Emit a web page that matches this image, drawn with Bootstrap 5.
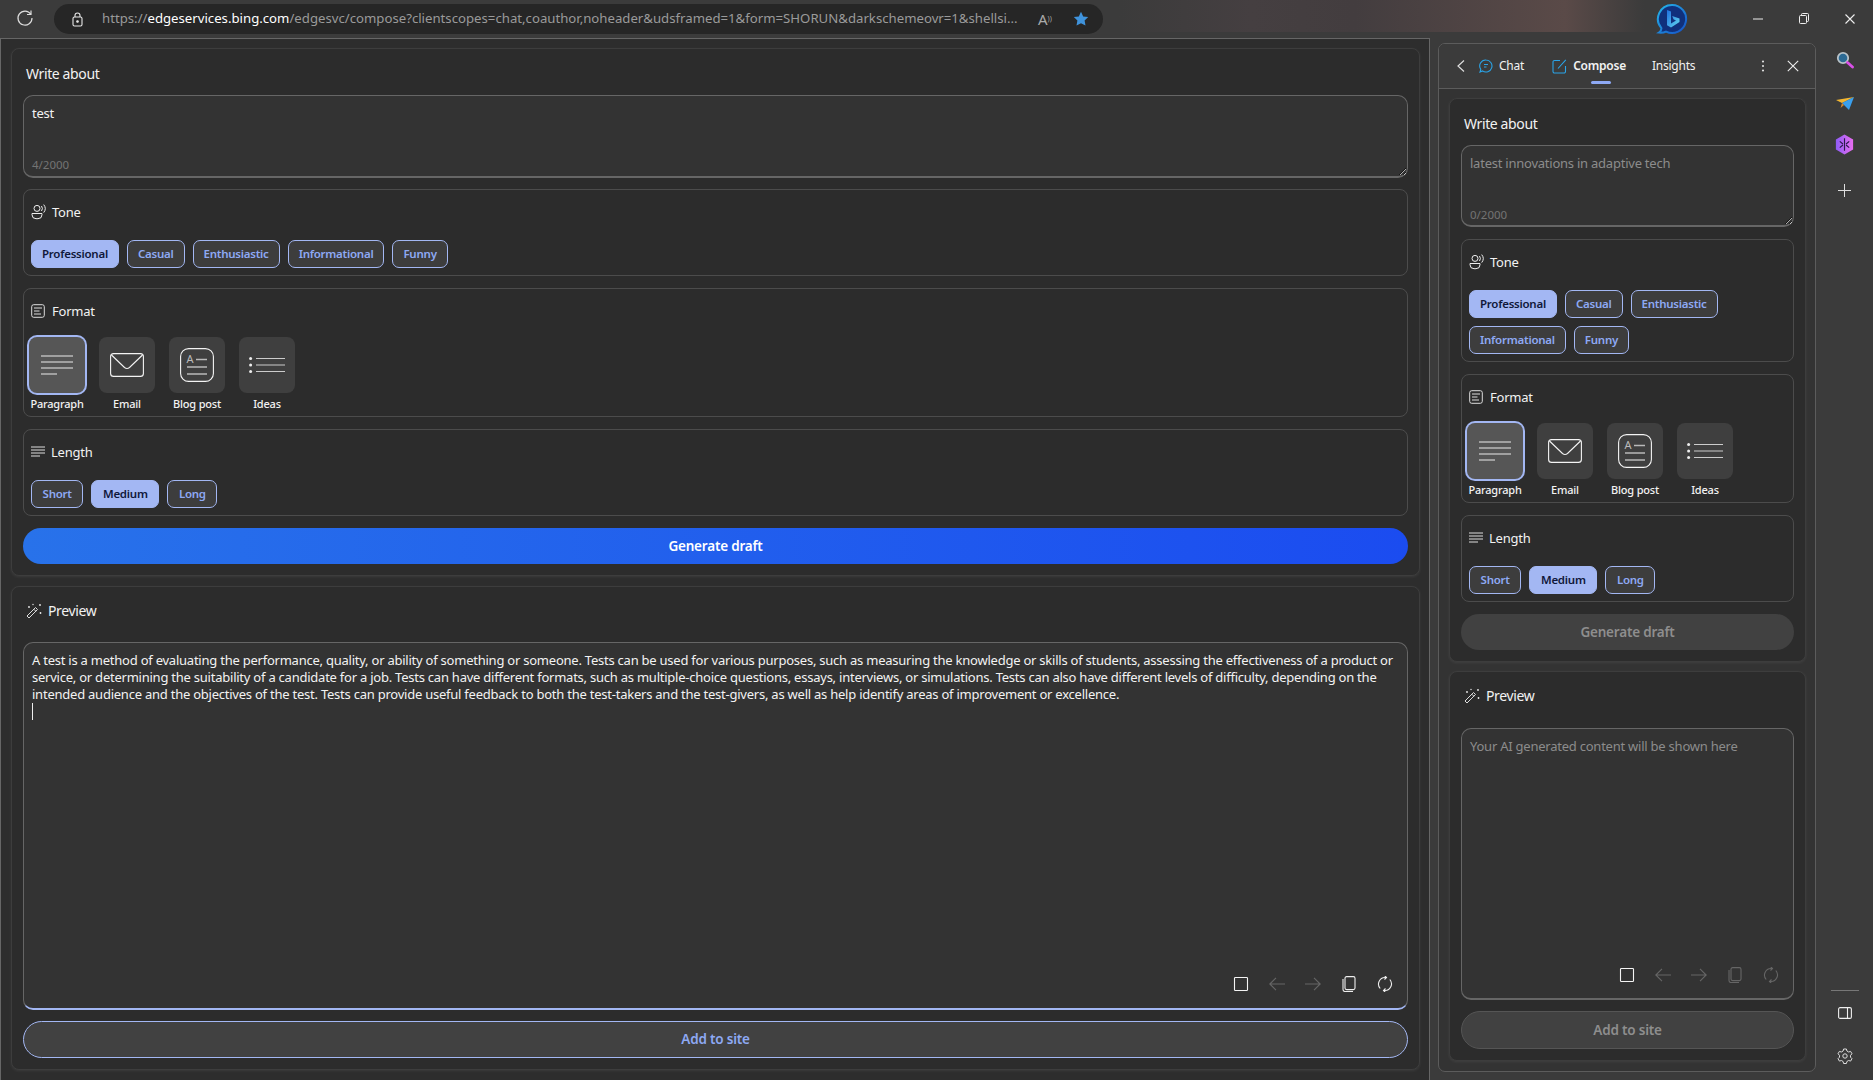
<!DOCTYPE html>
<html lang="en">
<head>
  <meta charset="UTF-8">
  <meta name="viewport" content="width=device-width, initial-scale=1.0">
  <title>Compose</title>
  <link href="https://cdn.jsdelivr.net/npm/bootstrap@5.3.3/dist/css/bootstrap.min.css" rel="stylesheet">
  <style>
    :root { color-scheme: dark; --accent:#a3b7f3; --accent-text:#8ea9f4; }
    body { background:#3b3b3b; color:#f2f2f2; font-family:"Noto Sans","Open Sans",sans-serif; font-size:13px; letter-spacing:-.235px; }
    svg { display:block; flex:none; }
    .topbar { height:38px; background:#3b3b3b; }
    .reload { width:54px; padding:9px 4px 0 0; }
    .addr { width:1049px; height:30px; background:#262626; border-radius:15px; padding:0 14px 0 18px; }
    .addr .url { width:925px; margin-left:19px; font-size:13.2px; letter-spacing:0; color:#9a9a9a; white-space:nowrap; overflow:hidden; }
    .addr .url b { font-weight:400; color:#fff; }
    .read-aloud { margin-left:11px; width:24px; color:#aaa; font-size:15px; letter-spacing:0; }
    .read-aloud sup { font-size:7px; }
    .star { margin-left:11px; }
    .blotch { height:32px; background:linear-gradient(90deg,#3b3b3b 0%,#453f41 25%,#433d3f 45%,#5a4a48 85%,#3b3b3b 100%); width:525px; }
    .logo { width:56px; padding-top:3px; }
    .win { width:46px; padding-top:12px; }
    .page { width:1430px; background:#2d2d2d; border:1px solid #666; border-bottom:0; padding:9px 9px 10px 10px; gap:10px; }
    .side { width:378px; margin:5px 0 8px 8px; background:#333; border:1px solid #5c5c5c; border-radius:7px; overflow:hidden; }
    .side-head { height:45px; flex:none; background:#3b3b3b; border-bottom:1px solid #5c5c5c; font-size:12px; }
    .side-body { padding:9px 9px 10px 10px; gap:9px; min-height:0; }
    .head-back { margin-left:17px; }
    .head-chat { margin-left:13px; }
    .head-label { margin-left:6px; }
    .head-compose { margin-left:28px; }
    .head-insights { margin-left:26px; }
    .head-x { margin:0 16px 0 22px; }
    .tab-on { font-weight:600; position:relative; }
    .tab-line { position:absolute; left:18px; right:15px; bottom:-9px; height:3px; border-radius:2px; background:var(--accent-text); }
    .rail { width:57px; }
    .rail hr { width:28px; margin:0; border-color:#777; opacity:1; }
    .r-search { margin-top:13px; }
    .r-send { margin-top:28px; }
    .r-hex { margin-top:23px; }
    .r-plus { margin-top:29px; }
    .r-pane { margin-top:16px; }
    .r-gear { margin:29px 0 16px; }
    .cc { background:#2c2c2c; border:1px solid #3d3d3d; border-radius:8px; padding:15px 11px 11px; box-shadow:0 1px 3px rgba(255,255,255,.07); flex:none; }
    .cc-title { line-height:20px; font-size:14px; letter-spacing:-.38px; padding-left:3px; margin-bottom:11px; }
    .cc-stack { gap:12px; }
    .cc-grow { flex:1 1 0; min-height:0; padding-top:14px; }
    .cc-grow .cc-title { padding-left:3px; margin-bottom:21px; gap:6px; }
    .side .cc-grow .cc-title { margin-bottom:22px; }
    .ask { height:83px; margin-bottom:-1px; }
    .side .ask { margin-bottom:0; height:82px; }
    .ask textarea { height:100%; background:#333; color:#f2f2f2; border:1px solid #666; border-bottom-width:2px; border-radius:10px; padding:8px 8px; font-size:13px; letter-spacing:-.235px; box-shadow:none; }
    .ask textarea::placeholder { color:#8c8c8c; opacity:1; }
    .count { position:absolute; left:9px; bottom:5px; font-size:11.5px; color:#737373; letter-spacing:0; }
    .side .count { bottom:4px; }
    .box { border:1px solid #4c4c4c; border-radius:8px; padding:12px 7px 7px; }
    .box-title { line-height:20px; font-size:13px; margin-bottom:18px; gap:5px; }
    .box-format { padding-bottom:4px; padding-left:5px; }
    .box-format .box-title { margin-bottom:16px; padding-left:2px; gap:7px; }
    .box-length .box-title { gap:6px; }
    .chip { height:28px; font-size:11.5px; font-weight:600; line-height:26px; padding:0 10px; color:var(--accent-text); background:#3d3d3d; border:1px solid var(--accent); border-radius:7px; letter-spacing:-.25px; }
    .chip.on { background:var(--accent); color:#10183a; }
    .box-length .chip { padding:0 10.6px; }
    .tile-row { gap:14px; }
    .tile { width:56px; height:56px; background:#3f3f3f; border-radius:8px; }
    .tile.on { background:#565656; box-shadow:0 0 0 2px var(--accent); }
    .tile-label { width:56px; margin-top:3px; line-height:16px; font-size:11px; font-weight:500; letter-spacing:-.2px; white-space:nowrap; display:flex; justify-content:center; }
    .wide { height:36px; border-radius:18px; border:0; font-size:13.5px; font-weight:600; letter-spacing:-.2px; }
    .go { background:linear-gradient(90deg,#2872ea,#1b4cf0); color:#fff; }
    .go.off { background:#414141; color:#8e8e8e; }
    .output { flex:1 1 0; min-height:0; background:#333; border:1px solid #666; border-bottom:2px solid var(--accent); border-radius:10px; padding:9px 8px 0; line-height:17px; margin-bottom:11px; }
    .side .output { border-bottom-color:#666; color:#8c8c8c; }
    .caret-mark { width:1px; height:17px; background:#eee; }
    .tools { position:absolute; right:14px; bottom:16px; gap:20px; }
    .side .tools { bottom:15px; }
    .tools svg { width:16px; height:16px; }
    .tool-on { color:#eee; }
    .tool-off { color:#666; }
    .add { height:37px; background:#414141; border:1px solid var(--accent); border-radius:19px; color:var(--accent-text); font-size:13.5px; font-weight:600; letter-spacing:-.2px; }
    .add.off { height:38px; border-color:#555; color:#8e8e8e; }
  </style>
</head>
<body class="d-flex flex-column vh-100 overflow-hidden">
  <!-- icon set -->
  <svg width="0" height="0" class="position-absolute">
    <defs>
      <symbol id="i-tone" viewBox="0 0 16 16"><g fill="none" stroke="#eee" stroke-width="1"><circle cx="6" cy="4.4" r="3"/><path d="M1 9.500h10v1.200a4 4 0 0 1-4 4H5a4 4 0 0 1-4-4zM10.500 2a4.200 4.200 0 0 1 0 5M12.700.6a6.400 6.400 0 0 1 0 8"/></g></symbol>
      <symbol id="i-format" viewBox="0 0 14 14"><g fill="none" stroke="#ddd"><rect x=".7" y=".7" width="12.600" height="12.600" rx="2"/><path d="M3 4h8M3 7h5.500M3 10h7"/></g></symbol>
      <symbol id="i-length" viewBox="0 0 14 12"><path d="M0 1h14M0 4h14M0 7h14M0 10h9" stroke="#ddd" fill="none"/></symbol>
      <symbol id="i-wand" viewBox="0 0 16 16"><g fill="none" stroke="#ddd"><path d="M1 13l8.500-8.500 2 2L3 15z"/><path d="M7.800 6.200l2 2"/></g><g fill="#eee"><circle cx="3" cy="4" r=".9"/><circle cx="14" cy="2" r=".9"/><circle cx="14.500" cy="10" r=".9"/><circle cx="7" cy="1.500" r=".7"/></g></symbol>
      <symbol id="i-para" viewBox="0 0 32 20"><path d="M0 1h32M0 7h32M0 13h32M0 19h16" stroke="#b9b9b9" stroke-width="1.600" fill="none"/></symbol>
      <symbol id="i-mail" viewBox="0 0 34 24"><g fill="none" stroke="#f4f4f4" stroke-width="1.100"><rect x=".6" y=".6" width="32.800" height="22.800" rx="3"/><path d="M1.500 2L14.500 14.500q2.500 2 5 0L32.500 2"/></g></symbol>
      <symbol id="i-blog" viewBox="0 0 34 34"><rect x=".6" y=".6" width="32.800" height="32.800" rx="8" fill="none" stroke="#f4f4f4" stroke-width="1.100"/><text x="6.500" y="15" font-size="11" fill="#bbb" font-family="Noto Sans,sans-serif">A</text><path d="M16 11.500h11M7 19h20M7 26h20" stroke="#b9b9b9" stroke-width="1.400" fill="none"/></symbol>
      <symbol id="i-ideas" viewBox="0 0 36 16"><g fill="#eee"><circle cx="1.600" cy="1.600" r="1.500"/><circle cx="1.600" cy="8" r="1.500"/><circle cx="1.600" cy="14.400" r="1.500"/></g><path d="M7 1.500h29M7 8h29M7 14.500h29" stroke="#ccc" fill="none"/></symbol>
      <symbol id="i-stop" viewBox="0 0 16 16"><rect x="1.500" y="1.500" width="13" height="13" rx=".8" fill="none" stroke="#f4f4f4" stroke-width="1.100"/></symbol>
      <symbol id="i-back" viewBox="0 0 16 16"><path d="M16 8H.8M7 1.800L.8 8 7 14.200" fill="none" stroke="#666" stroke-width="1.100"/></symbol>
      <symbol id="i-next" viewBox="0 0 16 16"><path d="M0 8h15.200M9 1.800L15.200 8 9 14.200" fill="none" stroke="#666" stroke-width="1.100"/></symbol>
      <symbol id="i-copy" viewBox="0 0 16 16"><g fill="none" stroke="currentColor" stroke-width="1.100"><rect x="4" y=".6" width="10" height="13" rx="1.600"/><path d="M2 3v10.500A2 2 0 0 0 4 15.500h8"/></g></symbol>
      <symbol id="i-redo" viewBox="0 0 16 16"><g fill="none" stroke="currentColor" stroke-width="1.100"><path d="M3.200 12.500A6.600 6.600 0 0 1 8 1.500h1.500M12.800 3.500A6.600 6.600 0 0 1 8 14.500H6.500"/><path d="M7.500-.5l2 2-2 2M8.500 12.500l-2 2 2 2"/></g></symbol>
      <linearGradient id="g-ring" x1="0" y1="0" x2="1" y2="1"><stop offset="0" stop-color="#25b6e8"/><stop offset="1" stop-color="#1550c8"/></linearGradient>
      <linearGradient id="g-b" x1="0" y1="0" x2="1" y2="1"><stop offset="0" stop-color="#1f6fe0"/><stop offset="1" stop-color="#62d8ee"/></linearGradient>
      <linearGradient id="g-hex" x1="0" y1="0" x2="1" y2="0"><stop offset="0" stop-color="#8f5cf6"/><stop offset="1" stop-color="#e86df0"/></linearGradient>
    </defs>
  </svg>

  <!-- Browser top bar -->
  <div class="topbar d-flex flex-none align-items-start">
    <div class="reload d-flex justify-content-center">
      <svg width="18" height="18" viewBox="0 0 18 18" fill="none" stroke="#ddd" stroke-width="1.200"><path d="M14.800 5.200A7 7 0 1 0 16 9"/><path d="M15 1.500v4h-4"/></svg>
    </div>
    <div class="addr d-flex align-items-center mt-1">
      <svg width="11" height="15" viewBox="0 0 11 15" fill="none" stroke="#e8e8e8" stroke-width="1.100"><rect x="1" y="5" width="9" height="9" rx="1.500"/><path d="M3 5V3.500a2.500 2.500 0 0 1 5 0V5"/><circle cx="5.500" cy="9.500" r=".8" fill="#e8e8e8"/></svg>
      <div class="url">https://<b>edgeservices.bing.com</b>/edgesvc/compose?clientscopes=chat,coauthor,noheader&amp;udsframed=1&amp;form=SHORUN&amp;darkschemeovr=1&amp;shellsi...</div>
      <span class="read-aloud">A<sup>))</sup></span>
      <svg class="star" width="16" height="16" viewBox="0 0 16 16"><path d="M8 .8l2.200 4.600 5 .7-3.600 3.500.9 5L8 12.200l-4.500 2.400.9-5L.8 6.100l5-.7z" fill="#3f93dc"/></svg>
    </div>
    <div class="blotch ms-3"></div>
    <div class="logo d-flex justify-content-center">
      <svg width="32" height="32" viewBox="0 0 32 32"><path d="M16 2a14 14 0 1 1-6 26.600c-2 1-4.500 1.200-7 1 1.500-1 2.500-2.500 2.400-4.400A14 14 0 0 1 16 2z" fill="#10307c" stroke="url(#g-ring)" stroke-width="2"/><path d="M11 7l4 1.500v12l5-3-2.500-1.200-1.300-3.300 7.300 2.600v3.400L15 24.500l-4-2.300z" fill="url(#g-b)"/></svg>
    </div>
    <div class="flex-grow-1"></div>
    <div class="win d-flex justify-content-center"><svg width="12" height="14" viewBox="0 0 12 14"><path d="M1 7h10" stroke="#eee"/></svg></div>
    <div class="win d-flex justify-content-center"><svg width="12" height="14" viewBox="0 0 12 14" fill="none" stroke="#eee"><rect x="1.500" y="3.500" width="7" height="8" rx="1"/><path d="M3.500 3.500V2.500a1 1 0 0 1 1-1h5a1 1 0 0 1 1 1v6a1 1 0 0 1-1 1h-1"/></svg></div>
    <div class="win d-flex justify-content-center"><svg width="12" height="14" viewBox="0 0 12 14" stroke="#eee" stroke-width="1.100"><path d="M1.500 2.500l9 9M10.500 2.500l-9 9"/></svg></div>
  </div>

  <div class="d-flex flex-grow-1 overflow-hidden">
    <!-- Full page compose -->
    <main class="page d-flex flex-column flex-none">
      <section class="cc d-flex flex-column">
        <div class="cc-title">Write about</div>
        <div class="cc-stack d-flex flex-column">
          <div class="ask position-relative">
            <textarea class="form-control">test</textarea>
            <span class="count">4/2000</span>
          </div>
          <div class="box">
            <div class="box-title d-flex align-items-center"><svg width="16" height="16"><use href="#i-tone"/></svg>Tone</div>
            <div class="d-flex flex-wrap gap-2">
              <span class="chip on">Professional</span><span class="chip">Casual</span><span class="chip">Enthusiastic</span><span class="chip">Informational</span><span class="chip">Funny</span>
            </div>
          </div>
          <div class="box box-format">
            <div class="box-title d-flex align-items-center"><svg width="14" height="14"><use href="#i-format"/></svg>Format</div>
            <div class="tile-row d-flex">
              <div><div class="tile on d-flex align-items-center justify-content-center"><svg width="32" height="20"><use href="#i-para"/></svg></div><div class="tile-label">Paragraph</div></div>
              <div><div class="tile d-flex align-items-center justify-content-center"><svg width="34" height="24"><use href="#i-mail"/></svg></div><div class="tile-label">Email</div></div>
              <div><div class="tile d-flex align-items-center justify-content-center"><svg width="34" height="34"><use href="#i-blog"/></svg></div><div class="tile-label">Blog post</div></div>
              <div><div class="tile d-flex align-items-center justify-content-center"><svg width="36" height="16"><use href="#i-ideas"/></svg></div><div class="tile-label">Ideas</div></div>
            </div>
          </div>
          <div class="box box-length">
            <div class="box-title d-flex align-items-center"><svg width="14" height="12"><use href="#i-length"/></svg>Length</div>
            <div class="d-flex gap-2">
              <span class="chip">Short</span><span class="chip on">Medium</span><span class="chip">Long</span>
            </div>
          </div>
          <button class="wide go btn w-100 p-0">Generate draft</button>
        </div>
      </section>
      <section class="cc cc-grow d-flex flex-column">
        <div class="cc-title d-flex align-items-center"><svg width="16" height="16"><use href="#i-wand"/></svg>Preview</div>
        <div class="output position-relative">
          A test is a method of evaluating the performance, quality, or ability of something or someone. Tests can be used for various purposes, such as measuring the knowledge or skills of students, assessing the effectiveness of a product or<br>
          service, or determining the suitability of a candidate for a job. Tests can have different formats, such as multiple-choice questions, essays, interviews, or simulations. Tests can also have different levels of difficulty, depending on the<br>
          intended audience and the objectives of the test. Tests can provide useful feedback to both the test-takers and the test-givers, as well as help identify areas of improvement or excellence.
          <div class="caret-mark"></div>
          <div class="tools d-flex">
            <svg><use href="#i-stop"/></svg><svg><use href="#i-back"/></svg><svg><use href="#i-next"/></svg><svg class="tool-on"><use href="#i-copy"/></svg><svg class="tool-on"><use href="#i-redo"/></svg>
          </div>
        </div>
        <button class="add btn w-100 p-0 flex-none">Add to site</button>
      </section>
    </main>

    <!-- Sidebar pane -->
    <aside class="side d-flex flex-column flex-none">
      <div class="side-head d-flex align-items-center">
        <svg class="head-back" width="10" height="14" viewBox="0 0 10 14" fill="none" stroke="#ddd" stroke-width="1.200"><path d="M8 1.500L2 7l6 5.500"/></svg>
        <svg class="head-chat" width="14" height="14" viewBox="0 0 14 14" fill="none" stroke="#2aa4e8" stroke-width="1.100"><path d="M7 1a6 6 0 1 1-3.500 10.900L1 13l.8-2.600A6 6 0 0 1 7 1zM5 5.500h4M5 8h2.500"/></svg>
        <span class="head-label">Chat</span>
        <svg class="head-compose" width="15" height="15" viewBox="0 0 15 15" fill="none" stroke="#2aa4e8" stroke-width="1.100"><path d="M8 1.500H2.500a1.500 1.500 0 0 0-1.500 1.500v9.500a1.500 1.500 0 0 0 1.500 1.500h9.500a1.500 1.500 0 0 0 1.500-1.500V7M6 9.500L13.800.8"/></svg>
        <span class="tab-on head-label">Compose<i class="tab-line"></i></span>
        <span class="head-insights">Insights</span>
        <svg class="ms-auto" width="4" height="12" viewBox="0 0 4 12" fill="#ddd"><circle cx="2" cy="1.500" r="1.100"/><circle cx="2" cy="6" r="1.100"/><circle cx="2" cy="10.500" r="1.100"/></svg>
        <svg class="head-x" width="12" height="12" viewBox="0 0 12 12" stroke="#eee" stroke-width="1.100"><path d="M.8.8l10.400 10.400M11.200.8L.8 11.200"/></svg>
      </div>
      <div class="side-body d-flex flex-column flex-grow-1">
        <section class="cc d-flex flex-column">
          <div class="cc-title">Write about</div>
          <div class="cc-stack d-flex flex-column">
            <div class="ask position-relative">
              <textarea class="form-control" placeholder="latest innovations in adaptive tech"></textarea>
              <span class="count">0/2000</span>
            </div>
            <div class="box">
              <div class="box-title d-flex align-items-center"><svg width="16" height="16"><use href="#i-tone"/></svg>Tone</div>
              <div class="d-flex flex-wrap gap-2">
                <span class="chip on">Professional</span><span class="chip">Casual</span><span class="chip">Enthusiastic</span><span class="chip">Informational</span><span class="chip">Funny</span>
              </div>
            </div>
            <div class="box box-format">
              <div class="box-title d-flex align-items-center"><svg width="14" height="14"><use href="#i-format"/></svg>Format</div>
              <div class="tile-row d-flex">
                <div><div class="tile on d-flex align-items-center justify-content-center"><svg width="32" height="20"><use href="#i-para"/></svg></div><div class="tile-label">Paragraph</div></div>
                <div><div class="tile d-flex align-items-center justify-content-center"><svg width="34" height="24"><use href="#i-mail"/></svg></div><div class="tile-label">Email</div></div>
                <div><div class="tile d-flex align-items-center justify-content-center"><svg width="34" height="34"><use href="#i-blog"/></svg></div><div class="tile-label">Blog post</div></div>
                <div><div class="tile d-flex align-items-center justify-content-center"><svg width="36" height="16"><use href="#i-ideas"/></svg></div><div class="tile-label">Ideas</div></div>
              </div>
            </div>
            <div class="box box-length">
              <div class="box-title d-flex align-items-center"><svg width="14" height="12"><use href="#i-length"/></svg>Length</div>
              <div class="d-flex gap-2">
                <span class="chip">Short</span><span class="chip on">Medium</span><span class="chip">Long</span>
              </div>
            </div>
            <button class="wide go off btn w-100 p-0">Generate draft</button>
          </div>
        </section>
        <section class="cc cc-grow d-flex flex-column">
          <div class="cc-title d-flex align-items-center"><svg width="16" height="16"><use href="#i-wand"/></svg>Preview</div>
          <div class="output position-relative">
            Your AI generated content will be shown here
            <div class="tools d-flex">
              <svg><use href="#i-stop"/></svg><svg><use href="#i-back"/></svg><svg><use href="#i-next"/></svg><svg class="tool-off"><use href="#i-copy"/></svg><svg class="tool-off"><use href="#i-redo"/></svg>
            </div>
          </div>
          <button class="add off btn w-100 p-0 flex-none">Add to site</button>
        </section>
      </div>
    </aside>

    <!-- Edge sidebar rail -->
    <nav class="rail d-flex flex-column align-items-center flex-none">
      <svg class="r-search" width="18" height="18" viewBox="0 0 18 18"><circle cx="7" cy="7" r="5.200" fill="#2c6a94" stroke="#b8c2c8" stroke-width="1.800"/><path d="M11.500 11.500l5 4.500" stroke="#d94fe8" stroke-width="2.800" stroke-linecap="round"/></svg>
      <svg class="r-send" width="18" height="14" viewBox="0 0 18 14"><path d="M0 3L18 0 6 6z" fill="#f2b632"/><path d="M18 0L13 13 6 6z" fill="#3aa0ee"/><path d="M6 6L4.500 11 8 8z" fill="#d8892a"/></svg>
      <svg class="r-hex" width="19" height="21" viewBox="0 0 18 20"><path d="M9 .5l8.200 4.700v9.600L9 19.500.8 14.800V5.200z" fill="url(#g-hex)"/><path d="M9 4v12M4.500 7l3 2.500M4.500 13l3-2.500M13.500 7l-3 2.500M13.500 13l-3-2.500" stroke="#2a1a4a" stroke-width="1.100" fill="none"/></svg>
      <svg class="r-plus" width="13" height="13" viewBox="0 0 13 13"><path d="M6.500 0v13M0 6.500h13" stroke="#ddd"/></svg>
      <hr class="mt-auto">
      <svg class="r-pane" width="14" height="12" viewBox="0 0 14 12" fill="none" stroke="#eee" stroke-width="1.100"><rect x=".6" y=".6" width="12.800" height="10.800" rx="1.500"/><path d="M9.500.6v10.800"/></svg>
      <svg class="r-gear" width="16" height="16" viewBox="0 0 16 16" fill="none" stroke="#ddd"><circle cx="8" cy="8" r="2.200"/><path d="M6.600 1h2.800l.5 2 1.700 1 2-.6 1.400 2.400-1.500 1.500v1.900l1.500 1.500-1.400 2.400-2-.6-1.700 1-.5 2H6.600l-.5-2-1.700-1-2 .6L1 10.700l1.500-1.500V7.300L1 5.800l1.400-2.400 2 .6 1.700-1z"/></svg>
    </nav>
  </div>
  <script src="https://cdn.jsdelivr.net/npm/bootstrap@5.3.3/dist/js/bootstrap.bundle.min.js"></script>
</body>
</html>
